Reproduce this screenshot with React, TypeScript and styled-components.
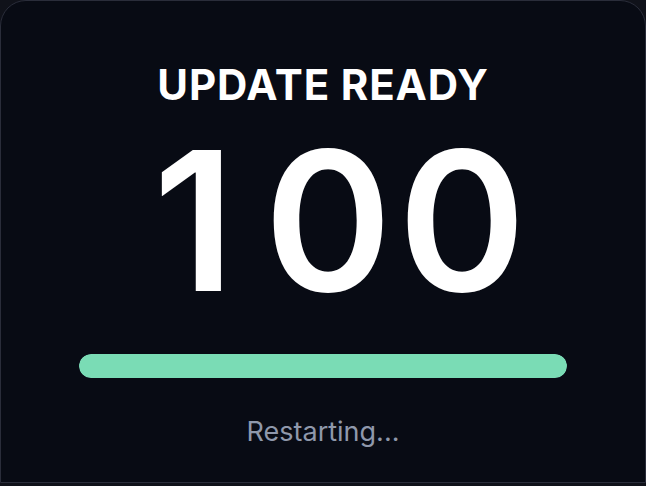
import React from "react";
import styled, { createGlobalStyle } from "styled-components";

const GlobalStyle = createGlobalStyle`
  html, body {
    margin: 0;
    padding: 0;
    background: #10121a;
  }
  body {
    font-family: Inter, "Noto Sans", "Liberation Sans", sans-serif;
    -webkit-font-smoothing: antialiased;
  }
`;

const Card = styled.div`
  box-sizing: border-box;
  width: 646px;
  height: 483px;
  background: #080b14;
  border: 1px solid #2a2d3a;
  border-radius: 26px 26px 0 0;
  display: flex;
  flex-direction: column;
  align-items: center;
  padding: 62px 78px 0;
`;

const Title = styled.div`
  font-size: 42px;
  line-height: 44px;
  font-weight: 700;
  letter-spacing: 0.02em;
  color: #ffffff;
`;

const Value = styled.div`
  margin-top: 19px;
  padding-left: 10px;
  display: flex;
  justify-content: center;
  font-size: 194px;
  line-height: 190px;
  font-weight: 600;
  color: #ffffff;
`;

const Digit = styled.span`
  width: 134px;
  text-align: center;
`;

const Track = styled.div`
  margin-top: 38px;
  width: 100%;
  height: 24px;
  border-radius: 12px;
  background: #1c2230;
  overflow: hidden;
`;

const Fill = styled.div`
  height: 100%;
  border-radius: 12px;
  background: #7adcb5;
`;

const Status = styled.div`
  margin-top: 39px;
  font-size: 27px;
  line-height: 30px;
  font-weight: 400;
  color: #8f98ab;
`;

export default function App() {
  const progress = 100;
  return (
    <>
      <GlobalStyle />
      <Card>
        <Title>UPDATE READY</Title>
        <Value>
          {String(progress)
            .split("")
            .map((d, i) => (
              <Digit key={i}>{d}</Digit>
            ))}
        </Value>
        <Track>
          <Fill style={{ width: `${progress}%` }} />
        </Track>
        <Status>Restarting...</Status>
      </Card>
    </>
  );
}
